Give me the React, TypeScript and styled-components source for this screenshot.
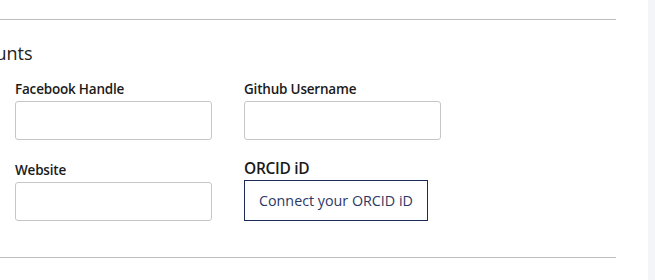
import React from "react";
import styled, { createGlobalStyle } from "styled-components";

const GlobalStyle = createGlobalStyle`
  html, body {
    margin: 0;
    padding: 0;
    background: #ffffff;
    overflow: hidden;
  }
  body {
    font-family: "Open Sans", "Noto Sans", sans-serif;
    color: #222222;
  }
  * { box-sizing: border-box; }
`;

const Page = styled.div`
  display: flex;
  width: 655px;
  height: 280px;
  overflow: hidden;
`;

const Main = styled.main`
  width: 648px;
  padding-top: 19px;
  overflow: hidden;
`;

const Track = styled.div`
  width: 7px;
  height: 280px;
  background: #f4f5f9;
`;

const Divider = styled.hr`
  width: 616px;
  margin: 0;
  border: none;
  border-top: 1px solid #bdbdbd;
`;

const Section = styled.section`
  padding: 21px 0 36px 15px;
`;

const Heading = styled.h2`
  margin: 0 0 15px -59px;
  font-size: 18px;
  line-height: 24px;
  font-weight: 400;
  color: #222222;
  white-space: nowrap;
`;

const Grid = styled.div`
  display: grid;
  grid-template-columns: 197px 197px;
  column-gap: 32px;
  row-gap: 18px;
  align-items: end;
`;

const Field = styled.div`
  display: flex;
  flex-direction: column;
`;

const Label = styled.label<{ $large?: boolean }>`
  font-size: ${(p) => (p.$large ? "15.5px" : "13.5px")};
  line-height: ${(p) => (p.$large ? "20px" : "18px")};
  font-weight: 600;
  letter-spacing: ${(p) => (p.$large ? "-0.3px" : "-0.2px")};
  color: #1a1a1a;
  margin-bottom: ${(p) => (p.$large ? "2px" : "3px")};
  white-space: nowrap;
`;

const Input = styled.input`
  width: 197px;
  height: 39px;
  border: 1px solid #c6c6c6;
  border-radius: 3px;
  background: #ffffff;
  font-family: inherit;
  font-size: 14px;
  padding: 0 10px;
  outline: none;
`;

const OrcidButton = styled.button`
  align-self: flex-start;
  height: 41px;
  padding: 0 14px;
  border: 1px solid #1c2a58;
  border-radius: 0;
  background: #ffffff;
  color: #2b3865;
  font-family: "Open Sans", "Noto Sans", sans-serif;
  font-size: 14.3px;
  font-weight: 400;
  white-space: nowrap;
  cursor: pointer;
`;

export default function App() {
  return (
    <>
      <GlobalStyle />
      <Page>
        <Main>
          <Divider />
          <Section>
            <Heading>Accounts</Heading>
            <Grid>
              <Field>
                <Label>Facebook Handle</Label>
                <Input type="text" />
              </Field>
              <Field>
                <Label>Github Username</Label>
                <Input type="text" />
              </Field>
              <Field>
                <Label>Website</Label>
                <Input type="text" />
              </Field>
              <Field>
                <Label $large>ORCID iD</Label>
                <OrcidButton type="button">Connect your ORCID iD</OrcidButton>
              </Field>
            </Grid>
          </Section>
          <Divider />
        </Main>
        <Track />
      </Page>
    </>
  );
}
